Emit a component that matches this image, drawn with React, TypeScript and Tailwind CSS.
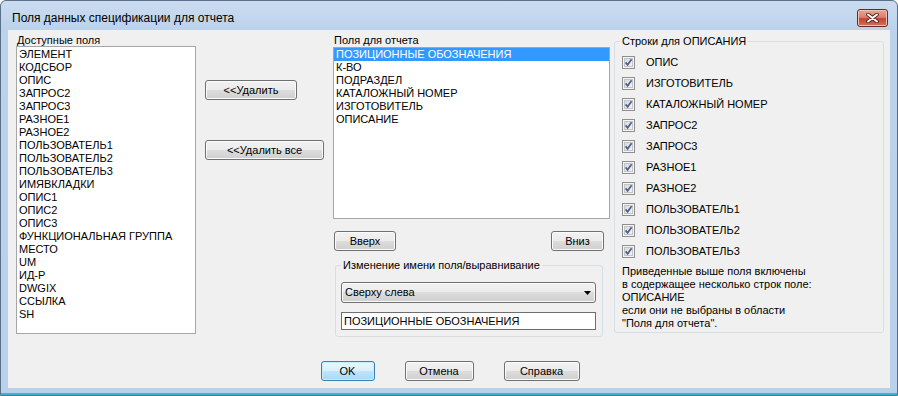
import React from 'react';

const availableFields = [
  'ЭЛЕМЕНТ', 'КОДСБОР', 'ОПИС', 'ЗАПРОС2', 'ЗАПРОС3', 'РАЗНОЕ1', 'РАЗНОЕ2',
  'ПОЛЬЗОВАТЕЛЬ1', 'ПОЛЬЗОВАТЕЛЬ2', 'ПОЛЬЗОВАТЕЛЬ3', 'ИМЯВКЛАДКИ', 'ОПИС1',
  'ОПИС2', 'ОПИС3', 'ФУНКЦИОНАЛЬНАЯ ГРУППА', 'МЕСТО', 'UM', 'ИД-Р', 'DWGIX',
  'ССЫЛКА', 'SH',
];

const reportFields = [
  'ПОЗИЦИОННЫЕ ОБОЗНАЧЕНИЯ', 'К-ВО', 'ПОДРАЗДЕЛ', 'КАТАЛОЖНЫЙ НОМЕР',
  'ИЗГОТОВИТЕЛЬ', 'ОПИСАНИЕ',
];

const descriptionFields = [
  'ОПИС', 'ИЗГОТОВИТЕЛЬ', 'КАТАЛОЖНЫЙ НОМЕР', 'ЗАПРОС2', 'ЗАПРОС3',
  'РАЗНОЕ1', 'РАЗНОЕ2', 'ПОЛЬЗОВАТЕЛЬ1', 'ПОЛЬЗОВАТЕЛЬ2', 'ПОЛЬЗОВАТЕЛЬ3',
];

const noteLines = [
  'Приведенные выше поля включены',
  'в содержащее несколько строк поле:',
  'ОПИСАНИЕ',
  'если они не выбраны в области',
  '"Поля для отчета".',
];

interface WinButtonProps {
  children: React.ReactNode;
  className?: string;
  primary?: boolean;
}

const WinButton: React.FC<WinButtonProps> = ({ children, className = '', primary = false }) => (
  <button
    type="button"
    className={`flex items-center justify-center h-[20px] rounded-[3px] border text-[11px] leading-none text-black ${
      primary
        ? 'border-[#3c7fb1] bg-[linear-gradient(#eaf6fd_0%,#d9f0fc_50%,#bee6fd_50%,#a7d9f5_100%)] shadow-[inset_0_0_0_1px_#c7ecfc]'
        : 'border-[#707070] bg-[linear-gradient(#f2f2f2_0%,#ebebeb_50%,#dddddd_50%,#cfcfcf_100%)] shadow-[inset_0_0_0_1px_#fbfbfb]'
    } ${className}`}
  >
    {children}
  </button>
);

const CheckBox: React.FC = () => (
  <svg width="13" height="13" viewBox="0 0 13 13" className="shrink-0">
    <defs>
      <linearGradient id="cbInner" x1="0" y1="0" x2="1" y2="1">
        <stop offset="0" stopColor="#d8d8d8" />
        <stop offset="1" stopColor="#f6f6f6" />
      </linearGradient>
    </defs>
    <rect x="0.5" y="0.5" width="12" height="12" fill="#f4f4f4" stroke="#8f8f8f" />
    <rect x="2.5" y="2.5" width="8" height="8" fill="url(#cbInner)" stroke="#c4c4c4" />
    <path d="M3.6 6.4 L5.6 8.8 L9.6 3.2" fill="none" stroke="#4a5f95" strokeWidth="1.7" />
  </svg>
);

const CloseButton: React.FC = () => (
  <div className="ml-auto mr-[9px] w-[31px] h-[18px] rounded-[3px] border border-[#6b2a26] bg-[linear-gradient(#e8a597_0%,#d9826f_45%,#c0452f_55%,#d2735b_100%)] shadow-[inset_0_0_0_1px_#f0c2b6] flex items-center justify-center">
    <svg width="13" height="10" viewBox="0 0 13 10">
      <path d="M2 1.5 L11 8.5 M11 1.5 L2 8.5" stroke="#4d1d1a" strokeWidth="3.6" strokeLinecap="round" />
      <path d="M2 1.5 L11 8.5 M11 1.5 L2 8.5" stroke="#ffffff" strokeWidth="2" strokeLinecap="round" />
    </svg>
  </div>
);

export default function App() {
  return (
    <div className="w-[898px] h-[396px] flex flex-col overflow-hidden rounded-t-[6px] border border-[#5a6f89] bg-[linear-gradient(#cbdcf0,#bbd2eb_30px,#b9d1ea)] font-['Liberation_Sans',Arial,sans-serif] text-black">
      {/* title bar */}
      <div className="h-[29px] shrink-0 flex items-center pt-[4px]">
        <span className="ml-[11px] text-[12px] leading-[14px] text-black">
          Поля данных спецификации для отчета
        </span>
        <CloseButton />
      </div>

      {/* client area */}
      <div className="mx-[7px] h-[358px] shrink-0 bg-[#f0f0f0] flex flex-col">
        <div className="flex pl-[8px] pt-[4px]">
          {/* available fields */}
          <div className="w-[180px] flex flex-col">
            <div className="ml-[1px] h-[12px] text-[11px] leading-[12px]">Доступные поля</div>
            <div className="h-[288px] border border-[#a6a6a6] bg-white pt-[1px]">
              {availableFields.map((f) => (
                <div key={f} className="h-[13px] pl-[2px] text-[11px] leading-[13px] whitespace-nowrap">
                  {f}
                </div>
              ))}
            </div>
          </div>

          {/* remove buttons */}
          <div className="ml-[9px] w-[119px] flex flex-col pt-[46px]">
            <WinButton className="w-[92px]">&lt;&lt;Удалить</WinButton>
            <WinButton className="w-[119px] mt-[40px]">&lt;&lt;Удалить все</WinButton>
          </div>

          {/* report fields */}
          <div className="ml-[9px] w-[277px] flex flex-col">
            <div className="ml-[1px] h-[13px] text-[11px] leading-[12px]">Поля для отчета</div>
            <div className="h-[172px] border border-[#a6a6a6] bg-white">
              {reportFields.map((f, i) => (
                <div
                  key={f}
                  className={`h-[13px] pl-[2px] text-[11px] leading-[13px] whitespace-nowrap ${
                    i === 0 ? 'bg-[#3399ff] text-white' : ''
                  }`}
                >
                  {f}
                </div>
              ))}
            </div>
            <div className="flex justify-between mt-[12px] pl-[1px] pr-[6px]">
              <WinButton className="w-[62px]">Вверх</WinButton>
              <WinButton className="w-[53px]">Вниз</WinButton>
            </div>
            <fieldset className="ml-[2px] mt-[8px] w-[268px] border border-[#d5dfe5] rounded-[3px] pl-[5px] pb-[6px]">
              <legend className="px-[2px] text-[11px] leading-[12px]">
                Изменение имени поля/выравнивание
              </legend>
              <div className="mt-[11px] w-[255px] h-[21px] rounded-[3px] border border-[#707070] bg-[linear-gradient(#f2f2f2_0%,#ebebeb_50%,#dddddd_50%,#cfcfcf_100%)] shadow-[inset_0_0_0_1px_#fbfbfb] flex items-center pl-[3px] pr-[4px] text-[11px]">
                <span>Сверху слева</span>
                <svg width="7" height="4" viewBox="0 0 7 4" className="ml-auto">
                  <path d="M0 0 H7 L3.5 4 Z" fill="#000" />
                </svg>
              </div>
              <div className="mt-[9px] w-[255px] h-[18px] border border-[#6e6e6e] bg-white flex items-center pl-[2px] text-[11px] whitespace-nowrap">
                ПОЗИЦИОННЫЕ ОБОЗНАЧЕНИЯ
              </div>
            </fieldset>
          </div>

          {/* description rows */}
          <fieldset className="ml-[4px] mt-[1px] w-[270px] h-[298px] border border-[#d5dfe5] rounded-[3px] pl-[7px]">
            <legend className="-ml-[2px] px-[2px] text-[11px] leading-[12px]">Строки для ОПИСАНИЯ</legend>
            <div className="mt-[5px] flex flex-col">
              {descriptionFields.map((f) => (
                <div key={f} className="h-[21px] flex items-center">
                  <CheckBox />
                  <span className="ml-[11px] text-[11px] leading-[13px] whitespace-nowrap">{f}</span>
                </div>
              ))}
            </div>
            <div className="mt-[3px] flex flex-col">
              {noteLines.map((l) => (
                <div key={l} className="h-[13px] text-[11px] leading-[13px] whitespace-nowrap">
                  {l}
                </div>
              ))}
            </div>
          </fieldset>
        </div>

        {/* dialog buttons */}
        <div className="mt-auto mb-[7px] flex justify-center pl-[2px] gap-[30px]">
          <WinButton primary className="w-[54px]">OK</WinButton>
          <WinButton className="w-[69px]">Отмена</WinButton>
          <WinButton className="w-[76px]">Справка</WinButton>
        </div>
      </div>

      <div className="flex-1" />
      <div className="h-[2px] shrink-0 bg-[#3bb4cf]" />
    </div>
  );
}
